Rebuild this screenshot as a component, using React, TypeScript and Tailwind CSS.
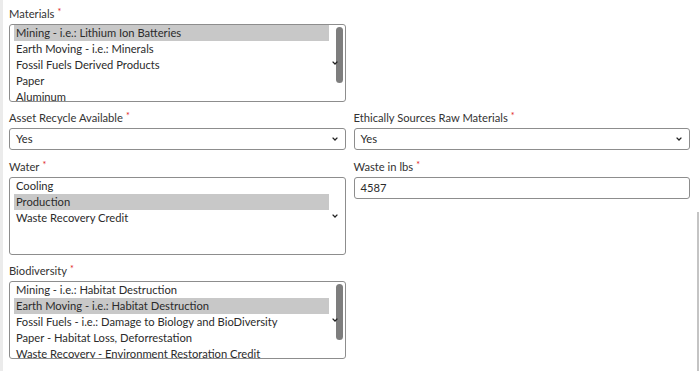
import { ReactNode } from 'react';

type Option = { label: string; selected?: boolean };

const Chevron = () => (
  <svg width="6" height="4" viewBox="0 0 6 4" className="shrink-0">
    <path d="M0.6 0.6 L3 3 L5.4 0.6" fill="none" stroke="#222" strokeWidth="1.3" />
  </svg>
);

const Label = ({ children }: { children: ReactNode }) => (
  <div className="h-4 text-[11.2px] leading-4 text-[#333]">
    {children}
    <span className="ml-[3px] align-top text-[9px] leading-3 text-[#e02020]">*</span>
  </div>
);

const ListBox = ({ options, thumb }: { options: Option[]; thumb?: boolean }) => (
  <div className="relative h-[78px] overflow-hidden rounded-[3px] border border-[#8d8d8d] bg-white">
    <div className="flex flex-col pl-1 pr-4">
      {options.map((o) => (
        <div
          key={o.label}
          className={`h-4 whitespace-nowrap pl-[2px] text-[11.2px] leading-[15px] text-[#2b2b2b] ${o.selected ? 'bg-[#c8c8c8]' : ''}`}
        >
          {o.label}
        </div>
      ))}
    </div>
    {thumb && <div className="absolute top-[2px] right-[2px] h-[56px] w-[7px] rounded-full bg-[#7e7e7e]" />}
    <div className="absolute top-0 right-[7px] bottom-0 flex items-center">
      <Chevron />
    </div>
  </div>
);

const Select = ({ value }: { value: string }) => (
  <div className="flex h-[22px] items-center justify-between rounded-[3px] border border-[#8d8d8d] bg-white pr-[7px] pl-[6px] text-[11.2px] text-[#2b2b2b]">
    <span>{value}</span>
    <Chevron />
  </div>
);

const materials: Option[] = [
  { label: 'Mining - i.e.: Lithium Ion Batteries', selected: true },
  { label: 'Earth Moving - i.e.: Minerals' },
  { label: 'Fossil Fuels Derived Products' },
  { label: 'Paper' },
  { label: 'Aluminum' },
];

const water: Option[] = [
  { label: 'Cooling' },
  { label: 'Production', selected: true },
  { label: 'Waste Recovery Credit' },
];

const biodiversity: Option[] = [
  { label: 'Mining - i.e.: Habitat Destruction' },
  { label: 'Earth Moving - i.e.: Habitat Destruction', selected: true },
  { label: 'Fossil Fuels - i.e.: Damage to Biology and BioDiversity' },
  { label: 'Paper - Habitat Loss, Deforrestation' },
  { label: 'Waste Recovery - Environment Restoration Credit' },
];

export default function App() {
  return (
    <div
      className="relative h-[371px] w-[699px] overflow-hidden border-l-[3px] border-[#ebebeb] bg-white pt-[6px] pr-[9px] pl-[6px]"
      style={{ fontFamily: 'Lato, "Open Sans", sans-serif' }}
    >
      <div className="grid grid-cols-2 gap-x-[8px]">
        <div>
          <Label>Materials</Label>
          <div className="mt-[2px]">
            <ListBox options={materials} thumb />
          </div>
        </div>
        <div />

        <div className="mt-[8px]">
          <Label>Asset Recycle Available</Label>
          <div className="mt-[2px]">
            <Select value="Yes" />
          </div>
        </div>
        <div className="mt-[8px]">
          <Label>Ethically Sources Raw Materials</Label>
          <div className="mt-[2px]">
            <Select value="Yes" />
          </div>
        </div>

        <div className="mt-[9px]">
          <Label>Water</Label>
          <div className="mt-[2px]">
            <ListBox options={water} />
          </div>
        </div>
        <div className="mt-[9px]">
          <Label>Waste in lbs</Label>
          <div className="mt-[2px] flex h-[22px] items-center rounded-[3px] border border-[#8d8d8d] bg-white pl-[6px] text-[11.2px] text-[#2b2b2b]">
            4587
          </div>
        </div>

        <div className="mt-[8px]">
          <Label>Biodiversity</Label>
          <div className="mt-[2px]">
            <ListBox options={biodiversity} thumb />
          </div>
        </div>
        <div />
      </div>
      <div className="absolute top-[212px] right-0 bottom-0 w-[2px] bg-[#c4c4c4]" />
    </div>
  );
}
